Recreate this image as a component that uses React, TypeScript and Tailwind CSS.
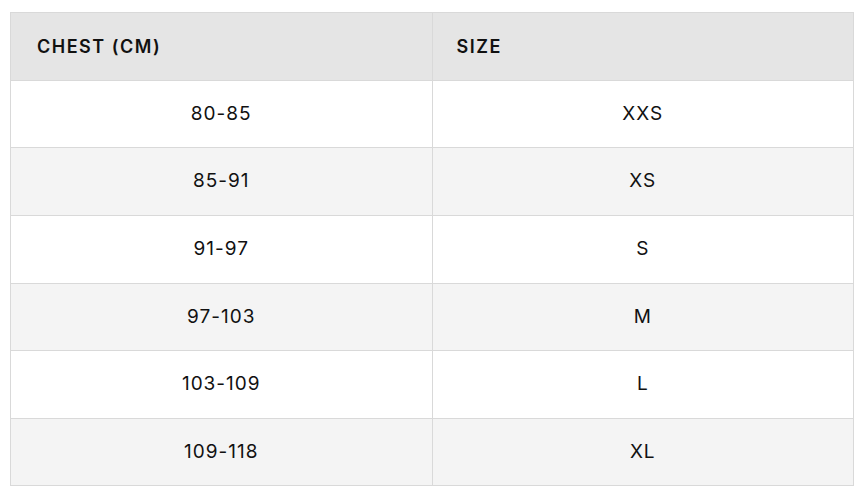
import React from 'react';

const rows = [
  { chest: '80-85', size: 'XXS', h: 'h-[67px]' },
  { chest: '85-91', size: 'XS', h: 'h-[68px]' },
  { chest: '91-97', size: 'S', h: 'h-[68px]' },
  { chest: '97-103', size: 'M', h: 'h-[67px]' },
  { chest: '103-109', size: 'L', h: 'h-[68px]' },
  { chest: '109-118', size: 'XL', h: 'h-[67px]' },
];

export default function App() {
  return (
    <div className="min-h-screen bg-white px-[10px] pt-[12px] font-['Inter',sans-serif] text-[#111]">
      <table className="w-[844px] table-fixed border-collapse border border-[#d9d9d9]">
        <thead>
          <tr className="h-[68px] bg-[#e5e5e5]">
            <th className="border border-[#d9d9d9] pl-[26px] text-left text-[18px] font-semibold tracking-[1.5px]">CHEST (CM)</th>
            <th className="border border-[#d9d9d9] pl-[24px] text-left text-[18px] font-semibold tracking-[1.5px]">SIZE</th>
          </tr>
        </thead>
        <tbody>
          {rows.map((r, i) => (
            <tr key={r.chest} className={`${r.h} ${i % 2 === 1 ? 'bg-[#f4f4f4]' : 'bg-white'}`}>
              <td className="border border-[#d9d9d9] text-center text-[19px] tracking-[1px]">{r.chest}</td>
              <td className="border border-[#d9d9d9] text-center text-[19px] tracking-[1px]">{r.size}</td>
            </tr>
          ))}
        </tbody>
      </table>
    </div>
  );
}
